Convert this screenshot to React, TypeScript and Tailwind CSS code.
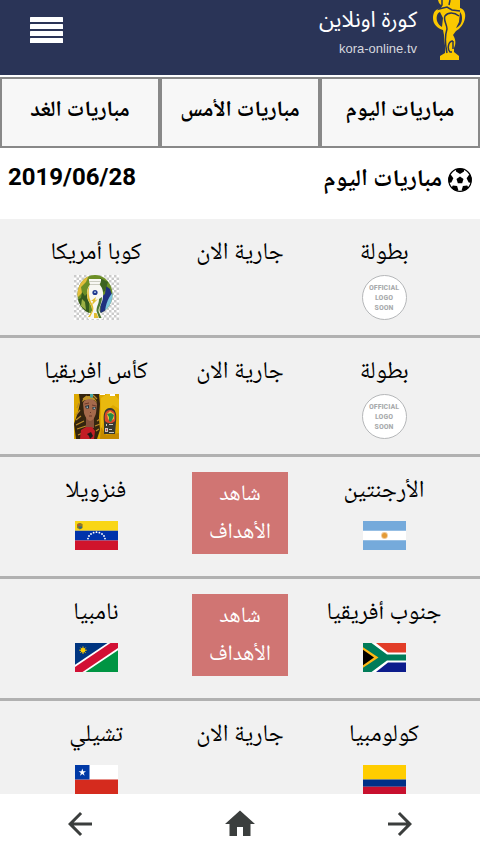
import type { ReactNode } from 'react';
import { MdArrowBack, MdArrowForward, MdHome } from 'react-icons/md';

type Team = { name: string; logo: ReactNode };
type Match = { home: Team; away: Team; finished?: boolean };

const TABS = ['مباريات اليوم', 'مباريات الأمس', 'مباريات الغد'];

function Flag({ label, children }: { label: string; children: ReactNode }) {
  return (
    <svg className="w-[45px] h-[45px]" viewBox="0 0 45 45" role="img" aria-label={label}>
      <svg x="1" y="8" width="43" height="29" viewBox="0 0 43 29" preserveAspectRatio="none">
        {children}
      </svg>
    </svg>
  );
}

function Argentina() {
  return (
    <Flag label="الأرجنتين">
      <path fill="#75aadb" d="M0 0h43v29H0z" />
      <path fill="#fff" d="M0 9.7h43v9.6H0z" />
      <circle cx="21.5" cy="14.5" r="3.4" fill="#f0c896" />
      <circle cx="21.5" cy="14.5" r="2.5" fill="#e39a35" />
    </Flag>
  );
}

function Venezuela() {
  const stars = [[13, 17.6], [14, 15], [16, 13], [18.6, 11.7], [21.5, 11.2], [24.4, 11.7], [27, 13], [29, 15], [30, 17.6]];
  return (
    <Flag label="فنزويلا">
      <path fill="#f9d616" d="M0 0h43v9.7H0z" />
      <path fill="#0033ab" d="M0 9.7h43v9.8H0z" />
      <path fill="#d0142c" d="M0 19.5h43V29H0z" />
      {stars.map(([x, y]) => (
        <circle key={x} cx={x} cy={y} r="0.9" fill="#fff" />
      ))}
      <path fill="#8d7a2c" d="M2 3.4c1-2 4.500-2 5.600 0V7L4.800 8.600 2 7z" />
      <path fill="#c8472f" d="M2.600 3.500h2V5h-2z" />
      <path fill="#2f6a83" d="M3 5.400h4v1.600l-2 1z" />
    </Flag>
  );
}

function SouthAfrica() {
  return (
    <Flag label="جنوب أفريقيا">
      <path fill="#fff" d="M0 0h43v29H0z" />
      <path fill="#e23d28" d="M13 0h30v9.500H25z" />
      <path fill="#0c1c8c" d="M13 29h30v-9.500H25z" />
      <path fill="#007c59" d="M0 0h8.500L24 11.500h19v6H24L8.500 29H0z" />
      <path fill="#ffb915" d="M0 4.200l15.500 10.300L0 24.800z" />
      <path fill="#000" d="M0 6.800l11 7.700L0 22.200z" />
    </Flag>
  );
}

function Namibia() {
  return (
    <Flag label="نامبيا">
      <path fill="#fff" d="M0 0h43v29H0z" />
      <path fill="#003580" d="M0 0h32.500L0 21.800z" />
      <path fill="#009543" d="M43 29H10.500L43 7.200z" />
      <path fill="#d21034" d="M35.500 0H43v5L7.500 29H0v-5z" />
      <path stroke="#ffce00" strokeWidth="1" d="M8 3.500v7.400M4.300 7.200h7.400M5.400 4.600l5.200 5.200M10.600 4.600L5.400 9.800" />
      <circle cx="8" cy="7.200" r="2.200" fill="#ffce00" />
    </Flag>
  );
}

function Colombia() {
  return (
    <Flag label="كولومبيا">
      <path fill="#ffcd00" d="M0 0h43v14.500H0z" />
      <path fill="#003087" d="M0 14.500h43v7.300H0z" />
      <path fill="#c8102e" d="M0 21.800h43V29H0z" />
    </Flag>
  );
}

function Chile() {
  return (
    <Flag label="تشيلي">
      <path fill="#fff" d="M0 0h43v14.500H0z" />
      <path fill="#d52b1e" d="M0 14.500h43V29H0z" />
      <path fill="#0039a6" d="M0 0h14.500v14.500H0z" />
      <path fill="#fff" d="M7.300 3.600l.9 2.700H11L8.700 8l.9 2.700-2.300-1.700L5 10.700 5.900 8 3.600 6.300h2.800z" />
    </Flag>
  );
}

function LogoSoon() {
  return (
    <div className="w-[45px] h-[45px] rounded-full border border-[#b5b7b9] bg-white flex flex-col items-center justify-center font-['Roboto_Condensed','Roboto',sans-serif] text-[8px] leading-[10px] font-bold text-[#a9abad]">
      <span>OFFICIAL</span>
      <span>LOGO</span>
      <span>SOON</span>
    </div>
  );
}

function CopaAmerica() {
  return (
    <svg className="w-[45px] h-[45px]" viewBox="0 0 45 45" role="img" aria-label="كوبا أمريكا">
      <defs>
        <pattern id="checker" width="5" height="5" patternUnits="userSpaceOnUse">
          <path fill="#fff" d="M0 0h5v5H0z" />
          <path fill="#cbcbcb" d="M0 0h2.500v2.500H0zM2.500 2.500H5V5H2.500z" />
        </pattern>
        <clipPath id="copa">
          <ellipse cx="21" cy="19.500" rx="17.500" ry="19.500" />
        </clipPath>
      </defs>
      <path fill="url(#checker)" d="M0 0h45v45H0z" />
      <g clipPath="url(#copa)">
        <path fill="#6c8f26" d="M0 0h45v45H0z" />
        <path fill="#e3bd3b" d="M0 0h15l-3 7-5 5 1 6-4 4H0z" />
        <path fill="#355a1e" d="M3 25l4-2 1-6 3 4 4-5v23H8z" />
        <path fill="#9bb043" d="M8 24l3 3 1 8-5-4z" />
        <path fill="#1f2f7f" d="M27 22l4-3 1-8 4 3 2 6-2 8-4 5-2 9h-4z" />
        <path fill="#7cc3dc" d="M39 17v14l-8 8c0-7 2-15 8-22z" />
        <path fill="#3d6321" d="M26 3l8 4-3 9-4 2z" />
      </g>
      <path fill="#f7f7f2" d="M15 4h12v2.500l-1.500 3C29 13 30 19 28.500 25c-1 4-3.500 7-3 11l3.500 6v2H14v-2l4-6c.5-4-2-7-4-11-2-6-1-12 2-15.500L15 6.500z" />
      <path fill="#e2bd2e" d="M15.500 11c-1.500 5-1 11 1.500 16 2 3 3 6 2 9l-3 6h-2l4-6c.5-4-2-7-4-11-1.500-5-1-11 1.500-14zM17 26l5-4-1 3.500 3-1.500-6 6 1-4zM20 38h2.500l2 5H20z" />
      <path fill="#4c7832" d="M25 24l3-2c0 7-3.500 10-3.500 14l3 7H25l-2.500-7c0-5 2.500-7 2.500-12z" />
      <circle cx="21" cy="17.500" r="2.600" fill="#20398f" />
      <path fill="#9eb8d9" d="M20 16.500h2v1.500h-2z" />
      <path fill="none" stroke="#b7b9ab" strokeWidth=".7" d="M15 6.500h12M16 9.500h10" />
    </svg>
  );
}

function AfricaCup() {
  return (
    <svg className="w-[45px] h-[45px]" viewBox="0 0 45 45" role="img" aria-label="كأس افريقيا">
      <path fill="#dda800" d="M0 0h45v45H0z" />
      <path fill="#e9b90f" d="M27 4l6-4h7l5 6v9l-6-4-8 7-4 20z" />
      <path fill="#c58a00" d="M27 33l5 8 13-2v6H26z" />
      <path fill="#fff" d="M26 0h5v1h-5zM36 0h5v2h-5z" />
      <path fill="#34240f" d="M5 0h20l1 10-1 14 1 12-3 9H2L0 30l4-12 2-9z" />
      <path fill="none" stroke="#b98a28" strokeWidth="1.300" d="M5 9l-2 5M6 16l-4 5M7 22l-5 4M10 27l-8 4M12 32l-9 3M13 37l-9 4M23 27l3-2M21 32l5-2M22 37l3-2M9 5l4-3M19 1l4 4" />
      <path fill="#bf9428" d="M8 8C9 4 11 2 15 2s7 3 8 7l-3-3h-9z" />
      <path fill="#85513b" d="M12 22h8v12h-8z" />
      <path fill="#a4694b" d="M9 9c1-3 4-4 7-4s6 2 7 5l-1 9c-1 5-4 8-6 8s-5-4-6-8z" />
      <path fill="#28343c" d="M11 12l4-1v3.500h-3zM18.500 13h3.500l-1 2.500h-2.500z" />
      <path fill="#8eb0b8" d="M12.500 12.500H14V14h-1.500zM19.500 13.500H21V15h-1.500z" />
      <path fill="none" stroke="#5c2b20" strokeWidth=".8" d="M10.500 10l4.500-1M18 11l4 1M15 22h3M16 18l1 1" />
      <path fill="#c21d25" d="M7 36l5-3h6l3 4-1 8H6z" />
      <path fill="#1c1b1b" d="M13 40l4-2 2 4-3 3-1-3z" />
      <path fill="#46a3a0" d="M16 0h3v3l-1.500 1L16 3z" />
      <path fill="#383931" d="M30 28c-1-7 0-14 6-14s7 7 6 14l-1 12H30z" />
      <path fill="#d9472b" d="M31 27c-1-6 0-11 5-11s6 5 5 11c-3 3-7 3-10 0z" />
      <path fill="#e9c540" d="M33 20l3-3 4 3v5l-4 2-2-2z" />
      <path fill="#248a4a" d="M33 20l4-1 3 2-1 3-2 4-2-1v-4z" />
      <path fill="#c9c9c1" d="M32 30h1v2h-1zM35 30h4v1h-4zM31 34h3v4h-3zM35 35h3v1h-3zM35 38h5v1h-5z" />
      <path fill="#d34552" d="M32 35h1v2h-1z" />
    </svg>
  );
}

function Trophy() {
  return (
    <svg className="w-[34px] h-[60px]" viewBox="0 0 34 60" aria-hidden="true">
      <path
        fill="#fac800"
        d="M6 0h22v8c4 1 6 5 5 10-1 6-5 11-9 13l-3 4c3 5 3 9 1 13v4l5 4v4H8v-4l5-3c1-6-1-11-1-18l-1-5C5 28 1 24 1 18c0-5 2-8 5-9l4-3-3-3z"
      />
      <path fill="#2a3457" d="M8 12c-3 1-4 5-3 9 1 3 3 5 5 6l1-9zM28 12l-1 10-3 6c4-2 6-5 6-10 0-3-1-5-2-6z" />
      <path
        fill="none"
        stroke="#2a3457"
        strokeWidth="1.500"
        d="M10 0v5l-3 4 8-2 5 3 8 1M17 5l1-5M27 16c-5-4-11-4-14 0-2 4 2 8 2 13-2 6-2 15 0 24M21 41c-5 0-6 8-3 11h2M21 41v8"
      />
    </svg>
  );
}

function Football() {
  return (
    <svg className="w-6 h-6" viewBox="0 0 24 24" aria-hidden="true">
      <defs>
        <clipPath id="ball">
          <circle cx="12" cy="12" r="11.500" />
        </clipPath>
      </defs>
      <circle cx="12" cy="12" r="11.300" fill="#fff" stroke="#000" strokeWidth="1.200" />
      <g clipPath="url(#ball)">
        <path d="M12 8.600l3.500 2.500-1.300 4.100H9.800L8.500 11.100z" />
        <path d="M8 0h8v3.500L12 6 8 3.500z" />
        <path d="M24 7v8l-3.300-.6-2.100-4.200 2.700-3.600z" />
        <path d="M0 7v8l3.300-.6 2.100-4.200-2.700-3.600z" />
        <path d="M13.700 22l1.200-4 4.300-.6 2 3.600-5 3z" />
        <path d="M10.300 22l-1.200-4-4.300-.6-2 3.600 5 3z" />
      </g>
    </svg>
  );
}

const MATCHES: Match[] = [
  { home: { name: 'بطولة', logo: <LogoSoon /> }, away: { name: 'كوبا أمريكا', logo: <CopaAmerica /> } },
  { home: { name: 'بطولة', logo: <LogoSoon /> }, away: { name: 'كأس افريقيا', logo: <AfricaCup /> } },
  { home: { name: 'الأرجنتين', logo: <Argentina /> }, away: { name: 'فنزويلا', logo: <Venezuela /> }, finished: true },
  { home: { name: 'جنوب أفريقيا', logo: <SouthAfrica /> }, away: { name: 'نامبيا', logo: <Namibia /> }, finished: true },
  { home: { name: 'كولومبيا', logo: <Colombia /> }, away: { name: 'تشيلي', logo: <Chile /> } },
];

function TeamCell({ team }: { team: Team }) {
  return (
    <div className="flex flex-col items-center gap-[3px]">
      <span className="leading-[38px] whitespace-nowrap">{team.name}</span>
      {team.logo}
    </div>
  );
}

function MatchRow({ match }: { match: Match }) {
  return (
    <li className="grid grid-cols-3 px-[5%] py-[15px] border-b-3 border-[#b1b1b1]">
      <TeamCell team={match.home} />
      <div className="flex flex-col items-center">
        {match.finished ? (
          <button className="w-2/3 mb-[7px] py-[3px] bg-[#d07573] text-white text-[22px] leading-[38px]">
            شاهد
            <br />
            الأهداف
          </button>
        ) : (
          <span className="leading-[38px] whitespace-nowrap">جارية الان</span>
        )}
      </div>
      <TeamCell team={match.away} />
    </li>
  );
}

export default function App() {
  return (
    <div
      dir="rtl"
      className="h-dvh flex flex-col bg-white text-black text-[24px] font-['Noto_Naskh_Arabic_UI','Noto_Naskh_Arabic','DejaVu_Sans',sans-serif]"
    >
      <div className="flex-1 min-h-0 overflow-y-auto [scrollbar-width:none]">
        <header className="flex items-start justify-between h-[75px] pr-[14px] pl-[30px] bg-[#2a3457]">
          <a href="#" className="flex gap-[15px] text-white">
            <Trophy />
            <span className="flex flex-col items-start">
              <span className="font-['Noto_Sans_Arabic','Noto_Sans',sans-serif] text-[22px] leading-[40px] whitespace-nowrap">
                كورة اونلاين
              </span>
              <span dir="ltr" className="font-['Liberation_Sans',sans-serif] text-[13px] leading-[18px] text-[#d5d7de]">
                kora-online.tv
              </span>
            </span>
          </a>
          <button className="mt-[17px]" aria-label="القائمة">
            <svg className="w-[33px] h-[26px]" viewBox="0 0 33 26" fill="#fff">
              <rect width="33" height="5" rx=".5" />
              <rect y="7" width="33" height="5" rx=".5" />
              <rect y="14" width="33" height="5" rx=".5" />
              <rect y="21" width="33" height="5" rx=".5" />
            </svg>
          </button>
        </header>

        <nav className="grid grid-cols-3 mt-[2px]">
          {TABS.map((tab) => (
            <a
              key={tab}
              href="#"
              className="h-[71px] pt-[10px] border-2 border-[#888] bg-[#f7f7f7] text-center text-[22px] leading-[42px] font-bold whitespace-nowrap"
            >
              {tab}
            </a>
          ))}
        </nav>

        <div className="flex items-start justify-between h-[71px] px-2">
          <h1 className="flex items-center gap-[6px] pt-[12px] font-bold text-[24px] leading-[40px]">
            <Football />
            مباريات اليوم
          </h1>
          <time dir="ltr" className="pt-[9px] font-['Roboto',sans-serif] font-bold text-[24px] leading-[40px]">
            2019/06/28
          </time>
        </div>

        <ul className="bg-[#f1f1f1]">
          {MATCHES.map((match) => (
            <MatchRow key={match.away.name} match={match} />
          ))}
        </ul>
      </div>

      <nav dir="ltr" className="grid grid-cols-3 h-[60px] shrink-0 bg-white text-[#3b3e3d]">
        <button className="flex items-center justify-center" aria-label="السابق">
          <MdArrowBack size={36} />
        </button>
        <button className="flex items-center justify-center" aria-label="الرئيسية">
          <MdHome size={36} />
        </button>
        <button className="flex items-center justify-center" aria-label="التالي">
          <MdArrowForward size={36} />
        </button>
      </nav>
    </div>
  );
}
